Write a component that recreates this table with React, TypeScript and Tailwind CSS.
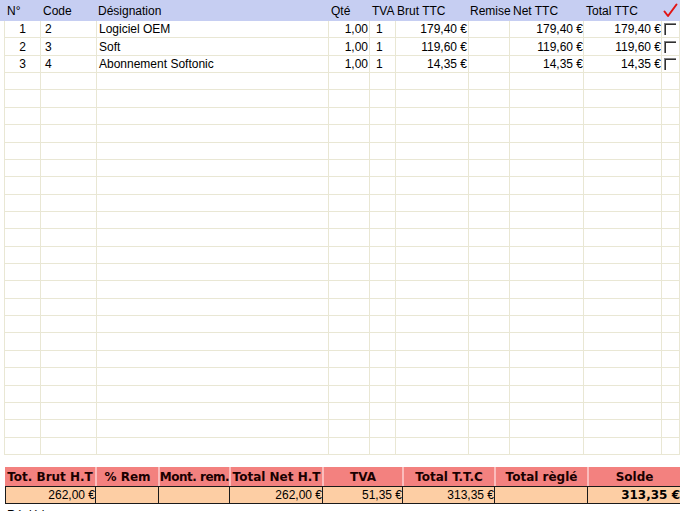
import React from "react";

type Col = { w: string; head: string; hcls: string; cls: string };

const cols: Col[] = [
  { w: "w-[36px]", head: "N°", hcls: "pl-[3px]", cls: "justify-end pr-[14px]" },
  { w: "w-[56px]", head: "Code", hcls: "pl-[3px]", cls: "justify-start pl-[4px]" },
  { w: "w-[232px]", head: "Désignation", hcls: "pl-[2px]", cls: "justify-start pl-[2px]" },
  { w: "w-[41px]", head: "Qté", hcls: "pl-[3px]", cls: "justify-end pr-[1px]" },
  { w: "w-[26px]", head: "TVA", hcls: "pl-[3px]", cls: "justify-start pl-[6px]" },
  { w: "w-[73px]", head: "Brut TTC", hcls: "pl-[2px]", cls: "justify-end pr-[1px]" },
  { w: "w-[41px]", head: "Remise", hcls: "pl-[2px]", cls: "justify-end pr-[1px]" },
  { w: "w-[74px]", head: "Net TTC", hcls: "pl-[4px]", cls: "justify-end pr-0" },
  { w: "w-[78px]", head: "Total TTC", hcls: "pl-[3px]", cls: "justify-end pr-0" },
];

const data: string[][] = [
  ["1", "2", "Logiciel OEM", "1,00", "1", "179,40 €", "", "179,40 €", "179,40 €"],
  ["2", "3", "Soft", "1,00", "1", "119,60 €", "", "119,60 €", "119,60 €"],
  ["3", "4", "Abonnement Softonic", "1,00", "1", "14,35 €", "", "14,35 €", "14,35 €"],
];

const rows: (string[] | null)[] = [...data, ...Array.from({ length: 22 }, () => null)];

const sumCols = [
  { w: "w-[90px]", head: "Tot. Brut H.T", val: "262,00 €", t: "" },
  { w: "w-[63px]", head: "% Rem", val: "", t: "" },
  { w: "w-[71px]", head: "Mont. rem.", val: "", t: "tracking-[-0.5px]" },
  { w: "w-[93px]", head: "Total Net H.T", val: "262,00 €", t: "" },
  { w: "w-[80px]", head: "TVA", val: "51,35 €", t: "" },
  { w: "w-[92px]", head: "Total T.T.C", val: "313,35 €", t: "" },
  { w: "w-[93px]", head: "Total règlé", val: "", t: "" },
  { w: "w-[93px]", head: "Solde", val: "313,35 €", t: "" },
];

function Checkbox() {
  return (
    <span className="block w-[12px] h-[12px] bg-white border-t border-l border-[#808080] border-b-[#e8e6dc] border-r-[#e8e6dc] shadow-[inset_1px_1px_0_#303030]" />
  );
}

export default function App() {
  return (
    <div className="w-[680px] h-[511px] bg-white overflow-hidden text-black text-[12px] leading-[14px] [font-family:'Liberation_Sans',Arial,sans-serif]">
      {/* header */}
      <div className="flex h-[21px] bg-[#c6cef2]">
        <div className="w-[4px]" />
        {cols.map((c, i) => (
          <div key={i} className={`${c.w} ${c.hcls} flex items-center whitespace-nowrap`}>
            {c.head}
          </div>
        ))}
        <div className="w-[19px] flex items-center pl-[2px]">
          <svg width="15" height="15" viewBox="0 0 15 15">
            <path d="M1.5 8.5 L5 13 L13.5 1.5" fill="none" stroke="#e21414" strokeWidth="2" strokeLinecap="round" strokeLinejoin="round" />
          </svg>
        </div>
      </div>
      {/* grid */}
      <div className="flex flex-col h-[434px]">
        {rows.map((r, ri) => (
          <div key={ri} className="flex flex-1 min-h-0">
            <div className="w-[4px]" />
            {cols.map((c, ci) => (
              <div
                key={ci}
                className={`${c.w} ${c.cls} flex items-center whitespace-nowrap border-l border-b border-[#e9e7d4]`}
              >
                {r ? r[ci] : ""}
              </div>
            ))}
            <div className="w-[19px] flex items-center pl-[2px] border-l border-r border-b border-[#e9e7d4]">
              {r ? <Checkbox /> : null}
            </div>
          </div>
        ))}
      </div>
      {/* summary */}
      <div className="ml-[5px] mt-[12px] w-[675px]">
        <div className="flex h-[19px] bg-[#f3817f]">
          {sumCols.map((s, i) => (
            <div
              key={i}
              className={`${s.w} ${s.t} flex items-center justify-center whitespace-nowrap overflow-hidden font-bold text-[12px] text-[#1a0000] [font-family:'DejaVu_Sans',Verdana,sans-serif] ${
                i > 0 ? "border-l-2 border-[#fbbcbc]" : ""
              }`}
            >
              {s.head}
            </div>
          ))}
        </div>
        <div className="flex h-[18px] bg-[#fdcea4] border-t border-b border-[#1a1a1a]">
          {sumCols.map((s, i) => (
            <div
              key={i}
              className={`${s.w} flex items-center justify-end whitespace-nowrap border-l border-[#1a1a1a] ${
                i === 7 ? "font-bold [font-family:'DejaVu_Sans',Verdana,sans-serif]" : ""
              }`}
            >
              {s.val}
            </div>
          ))}
        </div>
      </div>
      <div className="pl-[7px] pt-[4px] text-[12px] whitespace-nowrap">Réglé le</div>
    </div>
  );
}
